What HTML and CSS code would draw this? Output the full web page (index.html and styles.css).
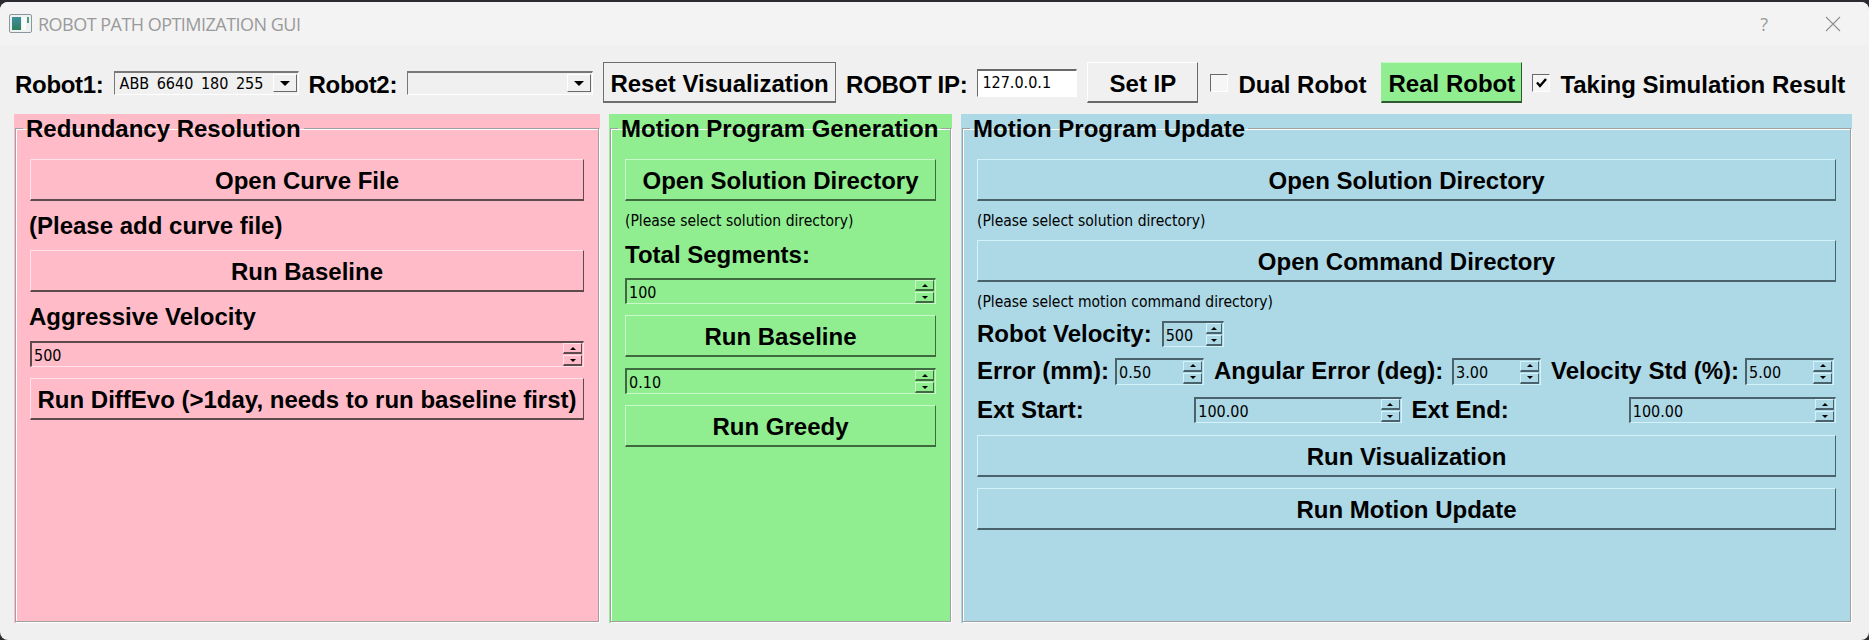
FILE: index.html
```html
<!DOCTYPE html>
<html lang="en">
<head>
	<meta charset="UTF-8">
	<title>ROBOT PATH OPTIMIZATION GUI</title>
	<link rel="stylesheet" href="styles.css">
</head>
<body>
<div class="window">
	<div class="titlebar">
		<svg class="appicon" width="23" height="19" viewBox="0 0 23 19">
			<defs>
				<linearGradient id="shot" x1="0" y1="0" x2="0" y2="1">
					<stop offset="0" stop-color="#3f8fa0"/>
					<stop offset="1" stop-color="#2f7f5a"/>
				</linearGradient>
			</defs>
			<rect x="0.5" y="0.5" width="22" height="18" rx="1.5" fill="#eef1f2" stroke="#8b979c"/>
			<rect x="3" y="3" width="9" height="13" fill="url(#shot)"/>
			<rect x="13" y="3" width="4" height="13" fill="#fbfbfb"/>
			<rect x="18" y="3" width="2" height="6" fill="#4f9a80"/>
		</svg>
		<span class="title">ROBOT PATH OPTIMIZATION GUI</span>
		<span class="help">?</span>
		<svg class="close" width="16" height="16" viewBox="0 0 16 16"><path d="M1 1L15 15M15 1L1 15" stroke="#8f8f8f" stroke-width="1.1" fill="none"/></svg>
	</div>

	<div class="toolbar">
		<span class="lbl tight">Robot1:</span>
		<div class="combo c1"><span class="combo-text">ABB 6640 180 255</span><span class="combo-btn"><i class="down"></i></span></div>
		<span class="lbl tight">Robot2:</span>
		<div class="combo c2"><span class="combo-text"></span><span class="combo-btn"><i class="down"></i></span></div>
		<div class="btn reset">Reset Visualization</div>
		<span class="lbl tight">ROBOT IP:</span>
		<div class="ip">127.0.0.1</div>
		<div class="btn setip">Set IP</div>
		<span class="check"></span>
		<span class="lbl">Dual Robot</span>
		<div class="btn real">Real Robot</div>
		<span class="check"><svg width="15" height="15" viewBox="0 0 15 15"><path d="M3 7.5L6 11L12 4" stroke="#000" stroke-width="2.4" fill="none"/></svg></span>
		<span class="lbl">Taking Simulation Result</span>
	</div>

	<div class="panels">
		<div class="panel pink">
			<fieldset class="group">
				<legend>Redundancy Resolution</legend>
				<div class="btn">Open Curve File</div>
				<div class="lbl tall">(Please add curve file)</div>
				<div class="btn">Run Baseline</div>
				<div class="lbl tall">Aggressive Velocity</div>
				<div class="spin"><span>500</span><div class="arrows"><b><i class="up"></i></b><b><i class="down"></i></b></div></div>
				<div class="btn">Run DiffEvo (&gt;1day, needs to run baseline first)</div>
			</fieldset>
		</div>

		<div class="panel green">
			<fieldset class="group">
				<legend>Motion Program Generation</legend>
				<div class="btn">Open Solution Directory</div>
				<div class="hint">(Please select solution directory)</div>
				<div class="lbl">Total Segments:</div>
				<div class="spin"><span>100</span><div class="arrows"><b><i class="up"></i></b><b><i class="down"></i></b></div></div>
				<div class="btn">Run Baseline</div>
				<div class="spin"><span>0.10</span><div class="arrows"><b><i class="up"></i></b><b><i class="down"></i></b></div></div>
				<div class="btn">Run Greedy</div>
			</fieldset>
		</div>

		<div class="panel blue">
			<fieldset class="group">
				<legend>Motion Program Update</legend>
				<div class="btn">Open Solution Directory</div>
				<div class="hint">(Please select solution directory)</div>
				<div class="btn">Open Command Directory</div>
				<div class="hint">(Please select motion command directory)</div>
				<div class="row">
					<span class="lbl">Robot Velocity:</span>
					<div class="spin vel"><span>500</span><div class="arrows"><b><i class="up"></i></b><b><i class="down"></i></b></div></div>
				</div>
				<div class="row errs">
					<span class="lbl">Error (mm):</span>
					<div class="spin"><span>0.50</span><div class="arrows"><b><i class="up"></i></b><b><i class="down"></i></b></div></div>
					<span class="lbl">Angular Error (deg):</span>
					<div class="spin"><span>3.00</span><div class="arrows"><b><i class="up"></i></b><b><i class="down"></i></b></div></div>
					<span class="lbl">Velocity Std (%):</span>
					<div class="spin"><span>5.00</span><div class="arrows"><b><i class="up"></i></b><b><i class="down"></i></b></div></div>
				</div>
				<div class="row ext">
					<span class="lbl">Ext Start:</span>
					<div class="spin"><span>100.00</span><div class="arrows"><b><i class="up"></i></b><b><i class="down"></i></b></div></div>
					<span class="lbl">Ext End:</span>
					<div class="spin"><span>100.00</span><div class="arrows"><b><i class="up"></i></b><b><i class="down"></i></b></div></div>
				</div>
				<div class="btn">Run Visualization</div>
				<div class="btn">Run Motion Update</div>
			</fieldset>
		</div>
	</div>
</div>
</body>
</html>
```

FILE: styles.css
```css
* {
	margin: 0;
	padding: 0;
	box-sizing: border-box;
}
html, body {
	height: 640px;
	overflow: hidden;
}
body {
	background: #2c2c30;
	font-family: "Liberation Sans", Arial, sans-serif;
	color: #000;
}
.window {
	margin-top: 2px;
	height: 638px;
	background: #f0f0f0;
	border-radius: 8px;
	overflow: hidden;
	--light: #fff;
	--dark: #696969;
}

/* title bar */
.titlebar {
	height: 43px;
	background: #f3f3f3;
	display: flex;
	align-items: center;
	padding: 0 28px 0 9px;
}
.appicon {
	margin-right: 6px;
}
.title {
	font-family: "Open Sans", sans-serif;
	font-size: 18px;
	letter-spacing: -0.52px;
	color: #9a9a9a;
	flex: 1;
}
.help {
	font-family: "Open Sans", sans-serif;
	font-size: 18px;
	color: #9a9a9a;
	margin-right: 57px;
}

/* top row */
.toolbar {
	display: flex;
	align-items: center;
	gap: 10px;
	height: 41px;
	margin: 17px 0 11px;
	padding-left: 15px;
}
.lbl {
	font-size: 24px;
	font-weight: bold;
	line-height: 24px;
	white-space: nowrap;
}
.toolbar .lbl {
	padding-top: 4px;
}
.tight {
	letter-spacing: -0.3px;
}
.combo {
	height: 24px;
	display: flex;
	align-items: center;
	justify-content: space-between;
	border: 1px solid;
	border-color: #787878 #fff #fff #787878;
	border-top-width: 2px;
	padding-right: 1px;
	flex: none;
}
.c1 { width: 185px; }
.c2 { width: 186px; }
.combo-text, .ip, .spin span, .hint {
	font-family: "DejaVu Sans", sans-serif;
	font-stretch: condensed;
}
.combo-text {
	font-size: 16px;
	word-spacing: 3px;
	padding-left: 5px;
}
.combo-btn {
	width: 24px;
	height: 18px;
	background: #f0f0f0;
	border: 1px solid;
	border-color: #fff #696969 #696969 #fff;
	display: flex;
	align-items: center;
	justify-content: center;
}
.up, .down {
	display: block;
	width: 0;
	height: 0;
	border-left: 5px solid transparent;
	border-right: 5px solid transparent;
}
.down { border-top: 5px solid #000; }
.up { border-bottom: 5px solid #000; }

.btn {
	height: 42px;
	display: flex;
	align-items: center;
	justify-content: center;
	flex: none;
	padding-top: 2px;
	font-size: 24px;
	font-weight: bold;
	white-space: nowrap;
	border: 1px solid;
	border-color: var(--light) var(--dark) var(--dark) var(--light);
	border-bottom-width: 2px;
}
.toolbar .btn {
	height: 41px;
	padding-top: 4px;
}
.reset {
	width: 233px;
	border-color: #6e6e6e;
}
.ip {
	width: 100px;
	height: 28px;
	background: #fff;
	font-size: 16px;
	line-height: 24px;
	padding-left: 4px;
	border: 1px solid;
	border-color: #696969 #fff #fff #696969;
	border-top-width: 2px;
	flex: none;
}
.setip {
	width: 111px;
}
.check {
	width: 18px;
	height: 18px;
	background: #f6f6f6;
	border: 1px solid;
	border-color: #696969 #fff #fff #696969;
	display: flex;
	align-items: center;
	justify-content: center;
	flex: none;
	margin-left: 2px;
}
.real {
	width: 141px;
	margin-left: 5px;
	background: #90ee90;
	border-color: #c8f7c8 #2f5a2f #2f5a2f #90ee90;
}
.real + .check {
	margin-left: 0;
}

/* groups */
.panels {
	display: grid;
	grid-template-columns: 586px 343px 891px;
	gap: 9px;
	margin-left: 14px;
	height: 509px;
}
.panel {
	padding: 0 1px 1px;
}
.pink {
	background: #ffbcc8;
	--light: #ffe3e8;
	--dark: #5c4a4d;
}
.green {
	background: #90ee90;
	--light: #c9f8c9;
	--dark: #3f6a3f;
}
.blue {
	background: #add8e6;
	--light: #d3f2fc;
	--dark: #4a626b;
}
.group {
	height: 100%;
	min-width: 0;
	display: flex;
	flex-direction: column;
	gap: 11px;
	border: 1px solid #a0a0a0;
	box-shadow: inset 1px 1px 0 #fff, 1px 1px 0 #fff;
	padding: 17px 14px 0;
}
.group legend {
	font-size: 24px;
	font-weight: bold;
	line-height: 26px;
	white-space: nowrap;
	margin-left: -7px;
	padding: 2px 3px 0;
}
.tall {
	height: 27px;
	line-height: 27px;
	margin-left: -1px;
}
.hint {
	height: 20px;
	line-height: 18px;
	font-size: 15.5px;
}
.blue .hint {
	margin-bottom: -3px;
}

.spin {
	height: 26px;
	display: flex;
	align-items: center;
	justify-content: space-between;
	flex: none;
	border: 1px solid;
	border-color: var(--dark) var(--light) var(--light) var(--dark);
	border-width: 2px 1px 1px 2px;
	padding-right: 1px;
}
.spin span {
	font-size: 16px;
	padding: 1px 0 0 2px;
}
.arrows {
	width: 19px;
	display: flex;
	flex-direction: column;
	gap: 1px;
}
.vel .arrows {
	width: 16px;
}
.arrows b {
	height: 11px;
	display: flex;
	align-items: center;
	justify-content: center;
	border: 1px solid;
	border-color: var(--light) var(--dark) var(--dark) var(--light);
	border-bottom-width: 2px;
}
.arrows .up, .arrows .down {
	border-left-width: 3px;
	border-right-width: 3px;
}
.arrows .up { border-bottom-width: 3px; }
.arrows .down { border-top-width: 3px; }

.row {
	display: flex;
	align-items: flex-start;
	gap: 10px;
	height: 26px;
	flex: none;
}
.row .lbl {
	line-height: 26px;
}
.vel { width: 62px; }
.errs {
	display: grid;
	grid-template-columns: 128px 89px 228px 89px 184px 89px;
	height: 28px;
}
.errs .spin { height: 27px; }
.ext {
	display: grid;
	grid-template-columns: repeat(4, 1fr);
	height: 27px;
}
```
